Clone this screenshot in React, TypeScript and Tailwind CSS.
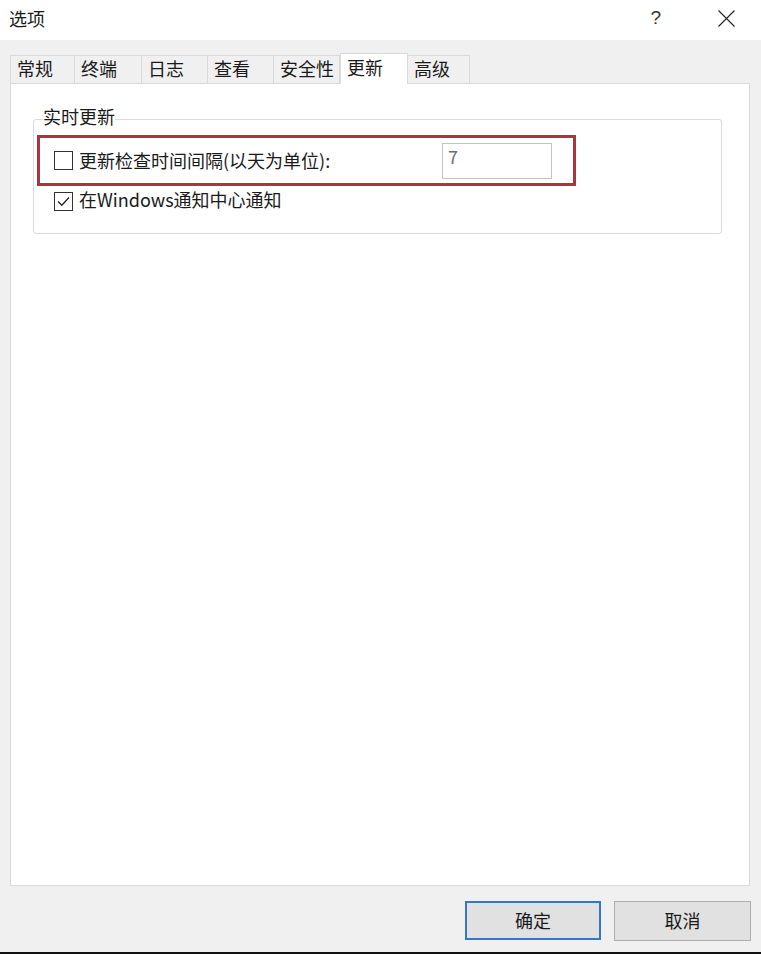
import { useState } from 'react';

const FONT = { fontFamily: '"Noto Sans CJK SC", "Noto Sans", "Liberation Sans", sans-serif' };

const tabs = [
  { label: '常规', w: 'w-[65px]' },
  { label: '终端', w: 'w-[67px]' },
  { label: '日志', w: 'w-[66px]' },
  { label: '查看', w: 'w-[66px]' },
  { label: '安全性', w: 'w-[66px]' },
  { label: '更新', w: 'w-[68px]' },
  { label: '高级', w: 'w-[62px]' },
];

function CheckBox({ checked }: { checked: boolean }) {
  return (
    <span className="w-[19px] h-[19px] shrink-0 border border-[#333333] bg-white flex items-center justify-center">
      {checked && (
        <svg width="15" height="15" viewBox="0 0 15 15">
          <path d="M2 7.5 L5.8 11.3 L13 3.5" fill="none" stroke="#222" strokeWidth="1.3" />
        </svg>
      )}
    </span>
  );
}

export default function App() {
  const [active] = useState('更新');
  const [notify, setNotify] = useState(true);

  return (
    <div className="w-[761px] h-[954px] flex flex-col bg-[#f0f0f0] text-[#1a1a1a] text-[18px] leading-[24px]" style={FONT}>
      {/* title bar */}
      <div className="h-[40px] bg-white flex items-center shrink-0">
        <span className="ml-[9px] mt-[-5px]">选项</span>
        <span className="ml-auto mt-[-4px] text-[19px] text-[#333]" style={{ fontFamily: '"Liberation Sans", sans-serif' }}>?</span>
        <svg className="ml-[57px] mr-[26px] mt-[-4px]" width="17" height="17" viewBox="0 0 17 17">
          <path d="M0.5 0.5 L16.5 16.5 M16.5 0.5 L0.5 16.5" stroke="#222" strokeWidth="1.1" />
        </svg>
      </div>

      {/* tabs */}
      <div className="flex items-end pl-[10px] mt-[13px] h-[30px] relative z-10">
        {tabs.map((t) => {
          const sel = t.label === active;
          return (
            <div
              key={t.label}
              className={
                sel
                  ? `${t.w} h-[31px] -mb-px bg-white border border-b-0 border-[#d9d9d9] pl-[6px] pt-[1px]`
                  : `${t.w} h-[28px] bg-[#f0f0f0] border border-l-0 border-b-0 border-[#d9d9d9] first:border-l pl-[6px] pt-0`
              }
            >
              {t.label}
            </div>
          );
        })}
      </div>

      {/* panel */}
      <div className="mx-[10px] mr-[11px] h-[803px] bg-white border border-[#d9d9d9] shrink-0 pt-[23px] px-[22px]">
        <fieldset className="border border-[#dadada] rounded-[3px] w-[689px] h-[127px] px-[3px]">
          <legend className="ml-[6px] px-0 text-[18px]">
            <span className="relative -top-[3px]">实时更新</span>
          </legend>
          <div className="mt-[4px] h-[51px] w-[539px] border-[3px] border-[#ac3441] flex items-center pl-[14px]">
            <CheckBox checked={false} />
            <span className="ml-[6px] relative -top-px">更新检查时间间隔(以天为单位):</span>
            <div className="ml-auto mr-[21px] w-[110px] h-[36px] border border-[#c4c4c4] text-[#6e6e6e] pl-[5px] pt-0">7</div>
          </div>
          <button
            className="mt-[3px] ml-[17px] flex items-center cursor-default"
            onClick={() => setNotify(!notify)}
          >
            <CheckBox checked={notify} />
            <span className="ml-[6px] relative -top-[2px]">在Windows通知中心通知</span>
          </button>
        </fieldset>
      </div>

      {/* buttons */}
      <div className="flex justify-end mt-[15px] pr-[10px] gap-[13px]">
        <button className="w-[136px] h-[39px] bg-[#e1e1e1] border-2 border-[#3578c0] pb-[2px]">确定</button>
        <button className="w-[137px] h-[40px] bg-[#e1e1e1] border border-[#adadad] pb-[2px]">取消</button>
      </div>

      <div className="mt-auto h-[2px] bg-[#111]" />
    </div>
  );
}
